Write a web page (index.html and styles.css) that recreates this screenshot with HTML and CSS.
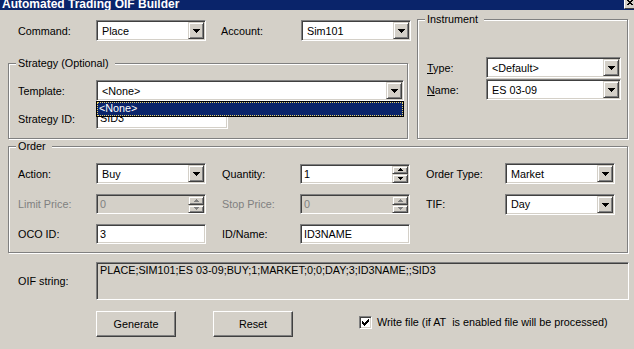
FILE: index.html
```html
<!DOCTYPE html>
<html lang="en">
<head>
    <meta charset="UTF-8">
    <title>Automated Trading OIF Builder</title>
    <link rel="stylesheet" href="styles.css">
</head>
<body>
    <div class="window">
        <div class="titlebar">
            <span class="title">Automated Trading OIF Builder</span>
            <span class="close">
                <svg width="8" height="7" viewBox="0 0 8 7"><path d="M1 0h2v1h-2zM5 0h2v1h-2zM2 1h2v1h-2zM4 1h2v1h-2zM3 2h2v1h-2zM2 3h2v1h-2zM4 3h2v1h-2zM1 4h2v1h-2zM5 4h2v1h-2z"/></svg>
            </span>
        </div>

        <div class="client">
            <div class="top">
                <div class="left">
                    <div class="cmd-row">
                        <span class="lbl">Command:</span>
                        <div class="combo"><span class="val">Place</span><span class="drop"><svg width="7" height="4" viewBox="0 0 7 4"><path d="M0 0h7v1h-7zM1 1h5v1h-5zM2 2h3v1h-3zM3 3h1v1h-1z"/></svg></span></div>
                        <span class="lbl pad">Account:</span>
                        <div class="combo"><span class="val">Sim101</span><span class="drop"><svg width="7" height="4" viewBox="0 0 7 4"><path d="M0 0h7v1h-7zM1 1h5v1h-5zM2 2h3v1h-3zM3 3h1v1h-1z"/></svg></span></div>
                    </div>

                    <div class="group strategy">
                        <div class="group-title">Strategy (Optional)</div>
                        <div class="strategy-grid">
                            <span class="lbl">Template:</span>
                            <div class="combo-wrap">
                                <div class="combo"><span class="val">&lt;None&gt;</span><span class="drop"><svg width="7" height="4" viewBox="0 0 7 4"><path d="M0 0h7v1h-7zM1 1h5v1h-5zM2 2h3v1h-3zM3 3h1v1h-1z"/></svg></span></div>
                                <div class="droplist"><div class="item">&lt;None&gt;</div></div>
                            </div>
                            <span class="lbl">Strategy ID:</span>
                            <div class="edit sid">SID3</div>
                        </div>
                    </div>
                </div>

                <div class="group instrument">
                    <div class="group-title">Instrument</div>
                    <div class="instrument-grid">
                        <span class="lbl"><u>T</u>ype:</span>
                        <div class="combo"><span class="val">&lt;Default&gt;</span><span class="drop"><svg width="7" height="4" viewBox="0 0 7 4"><path d="M0 0h7v1h-7zM1 1h5v1h-5zM2 2h3v1h-3zM3 3h1v1h-1z"/></svg></span></div>
                        <span class="lbl"><u>N</u>ame:</span>
                        <div class="combo"><span class="val">ES 03-09</span><span class="drop"><svg width="7" height="4" viewBox="0 0 7 4"><path d="M0 0h7v1h-7zM1 1h5v1h-5zM2 2h3v1h-3zM3 3h1v1h-1z"/></svg></span></div>
                    </div>
                </div>
            </div>

            <div class="group order">
                <div class="group-title">Order</div>
                <div class="order-grid">
                    <span class="lbl">Action:</span>
                    <div class="combo"><span class="val">Buy</span><span class="drop"><svg width="7" height="4" viewBox="0 0 7 4"><path d="M0 0h7v1h-7zM1 1h5v1h-5zM2 2h3v1h-3zM3 3h1v1h-1z"/></svg></span></div>
                    <span class="lbl pad">Quantity:</span>
                    <div class="edit spin"><span class="val">1</span><span class="spinner"><span class="sbtn"><svg width="5" height="3" viewBox="0 0 5 3"><path d="M2 0h1v1h-1zM1 1h3v1h-3zM0 2h5v1h-5z"/></svg></span><span class="sbtn"><svg width="5" height="3" viewBox="0 0 5 3"><path d="M0 0h5v1h-5zM1 1h3v1h-3zM2 2h1v1h-1z"/></svg></span></span></div>
                    <span class="lbl pad">Order Type:</span>
                    <div class="combo"><span class="val">Market</span><span class="drop"><svg width="7" height="4" viewBox="0 0 7 4"><path d="M0 0h7v1h-7zM1 1h5v1h-5zM2 2h3v1h-3zM3 3h1v1h-1z"/></svg></span></div>

                    <span class="lbl off">Limit Price:</span>
                    <div class="edit spin disabled"><span class="val">0</span><span class="spinner"><span class="sbtn"><svg width="5" height="3" viewBox="0 0 5 3"><path d="M2 0h1v1h-1zM1 1h3v1h-3zM0 2h5v1h-5z"/></svg></span><span class="sbtn"><svg width="5" height="3" viewBox="0 0 5 3"><path d="M0 0h5v1h-5zM1 1h3v1h-3zM2 2h1v1h-1z"/></svg></span></span></div>
                    <span class="lbl pad off">Stop Price:</span>
                    <div class="edit spin disabled"><span class="val">0</span><span class="spinner"><span class="sbtn"><svg width="5" height="3" viewBox="0 0 5 3"><path d="M2 0h1v1h-1zM1 1h3v1h-3zM0 2h5v1h-5z"/></svg></span><span class="sbtn"><svg width="5" height="3" viewBox="0 0 5 3"><path d="M0 0h5v1h-5zM1 1h3v1h-3zM2 2h1v1h-1z"/></svg></span></span></div>
                    <span class="lbl pad">TIF:</span>
                    <div class="combo"><span class="val">Day</span><span class="drop"><svg width="7" height="4" viewBox="0 0 7 4"><path d="M0 0h7v1h-7zM1 1h5v1h-5zM2 2h3v1h-3zM3 3h1v1h-1z"/></svg></span></div>

                    <span class="lbl">OCO ID:</span>
                    <div class="edit">3</div>
                    <span class="lbl pad">ID/Name:</span>
                    <div class="edit">ID3NAME</div>
                </div>
            </div>

            <div class="oif-row">
                <span class="lbl">OIF string:</span>
                <div class="oif-box">PLACE;SIM101;ES 03-09;BUY;1;MARKET;0;0;DAY;3;ID3NAME;;SID3</div>
            </div>

            <div class="btn-row">
                <button class="btn">Generate</button>
                <button class="btn reset">Reset</button>
                <label class="check">
                    <span class="box"><svg width="7" height="7" viewBox="0 0 7 7"><path d="M6 0h1v1h-1zM5 1h2v1h-2zM0 2h1v1h-1zM4 2h3v1h-3zM0 3h2v1h-2zM3 3h3v1h-3zM0 4h5v1h-5zM1 5h3v1h-3zM2 6h1v1h-1z"/></svg></span>
                    Write file (if AT&nbsp; is enabled file will be processed)
                </label>
            </div>
        </div>
    </div>
</body>
</html>
```

FILE: styles.css
```css
* {
    box-sizing: border-box;
}
body {
    margin: 0;
    background: #d4d0c8;
    font-family: "Liberation Sans", Arial, sans-serif;
    font-size: 10.8px;
    color: #000;
}
.window {
    width: 634px;
    height: 349px;
    overflow: hidden;
}
.titlebar {
    height: 10px;
    background: #0a246a;
    display: flex;
    justify-content: space-between;
    overflow: hidden;
}
.title {
    color: #fff;
    font-weight: bold;
    font-size: 12px;
    line-height: 8px;
    padding-left: 2px;
    white-space: nowrap;
}
.close {
    width: 10px;
    height: 9px;
    background: #d4d0c8;
    border-left: 1px solid #fff;
    border-bottom: 1px solid #404040;
    display: flex;
    align-items: flex-end;
    padding: 0 0 1px 1px;
}
.client {
    padding-left: 8px;
}
.top {
    display: flex;
    align-items: flex-start;
}
.left {
    width: 400px;
}
.lbl {
    white-space: nowrap;
}
.lbl.off {
    color: #808080;
}
.pad {
    padding-left: 16px;
}
.cmd-row {
    display: grid;
    grid-template-columns: 78px 110px 95px 110px;
    align-items: center;
    margin-top: 10px;
    padding-left: 10px;
}
.cmd-row .pad {
    padding-left: 15px;
}

/* group boxes */
.group {
    border: 1px solid #808080;
    box-shadow: inset 1px 1px #fff, 1px 1px #fff;
}
.group-title {
    width: fit-content;
    margin: -7px 0 0 7px;
    padding: 0 6px 0 2px;
    background: #d4d0c8;
    line-height: 13px;
}
.strategy {
    margin-top: 22px;
    height: 76px;
}
.strategy-grid {
    display: grid;
    grid-template-columns: 78px 308px;
    grid-auto-rows: 21px;
    row-gap: 7px;
    align-items: center;
    margin-top: 10px;
    padding-left: 9px;
}
.instrument {
    width: 211px;
    height: 120px;
    margin: 9px 0 0 9px;
}
.instrument-grid {
    display: grid;
    grid-template-columns: 59px 135px;
    grid-auto-rows: 21px;
    row-gap: 1px;
    align-items: center;
    margin-top: 31px;
    padding-left: 9px;
}
.order {
    width: 620px;
    height: 107px;
    margin-top: 7px;
}
.order-grid {
    display: grid;
    grid-template-columns: 78px 110px 94px 110px 95px 110px;
    grid-template-rows: 21px 20px 20px;
    row-gap: 10px;
    align-items: center;
    margin-top: 10px;
    padding-left: 9px;
}

/* sunken controls */
.combo, .edit, .oif-box, .box {
    background: #fff;
    border-top: 1px solid #808080;
    border-left: 1px solid #808080;
    border-right: 1px solid #fff;
    border-bottom: 1px solid #fff;
    box-shadow: inset 1px 1px #404040, inset -1px -1px #d4d0c8;
}
.combo {
    height: 21px;
    display: flex;
    align-items: center;
    padding: 1px;
}
.combo .val {
    flex: 1;
    padding-left: 4px;
    white-space: nowrap;
}
.drop, .sbtn {
    background: #d4d0c8;
    border-top: 1px solid #d4d0c8;
    border-left: 1px solid #d4d0c8;
    border-right: 1px solid #404040;
    border-bottom: 1px solid #404040;
    box-shadow: inset 1px 1px #fff, inset -1px -1px #808080;
    display: flex;
    align-items: center;
    justify-content: center;
}
.drop {
    width: 16px;
    height: 17px;
}
.drop svg {
    margin: 1px 0 0 0;
}
.edit {
    height: 20px;
    line-height: 16px;
    padding: 1px 1px 1px 3px;
    white-space: nowrap;
}
.edit.sid {
    height: 21px;
    width: 132px;
    line-height: 17px;
}
.spin {
    display: flex;
    align-items: center;
    padding: 1px 1px 1px 3px;
}
.spin .val {
    flex: 1;
}
.spinner {
    display: flex;
    flex-direction: column;
    width: 16px;
    height: 17px;
    margin-top: 1px;
}
.sbtn {
    flex: 1;
}
.order-grid .combo {
    height: 21px;
}
.disabled {
    background: #d4d0c8;
    color: #808080;
}
.disabled svg {
    fill: #808080;
}

.combo-wrap {
    position: relative;
}
.droplist {
    position: absolute;
    left: 0;
    top: 100%;
    width: 100%;
    height: 16px;
    border: 1px solid #000;
    background: #fff;
    z-index: 2;
}
.item {
    height: 14px;
    line-height: 13px;
    padding-left: 2px;
    background: #0a246a;
    color: #fff;
    outline: 1px dotted #e8d26a;
    outline-offset: -1px;
}

/* OIF string */
.oif-row {
    display: grid;
    grid-template-columns: 78px 533px;
    align-items: center;
    margin-top: 9px;
    padding-left: 10px;
}
.oif-box {
    height: 38px;
    background: #d4d0c8;
    padding: 1px 3px;
    line-height: 13px;
    white-space: nowrap;
}

/* buttons */
.btn-row {
    display: flex;
    align-items: center;
    margin-top: 11px;
    padding-left: 88px;
}
.btn {
    width: 80px;
    height: 26px;
    padding: 0;
    font: inherit;
    color: #000;
    background: #d4d0c8;
    border-top: 1px solid #fff;
    border-left: 1px solid #fff;
    border-right: 1px solid #404040;
    border-bottom: 1px solid #404040;
    box-shadow: inset -1px -1px #808080;
}
.btn.reset {
    margin-left: 37px;
}
.check {
    display: flex;
    align-items: center;
    margin: -4px 0 0 66px;
    white-space: nowrap;
}
.box {
    width: 13px;
    height: 13px;
    margin-right: 5px;
    display: flex;
    align-items: center;
    justify-content: center;
}
```
